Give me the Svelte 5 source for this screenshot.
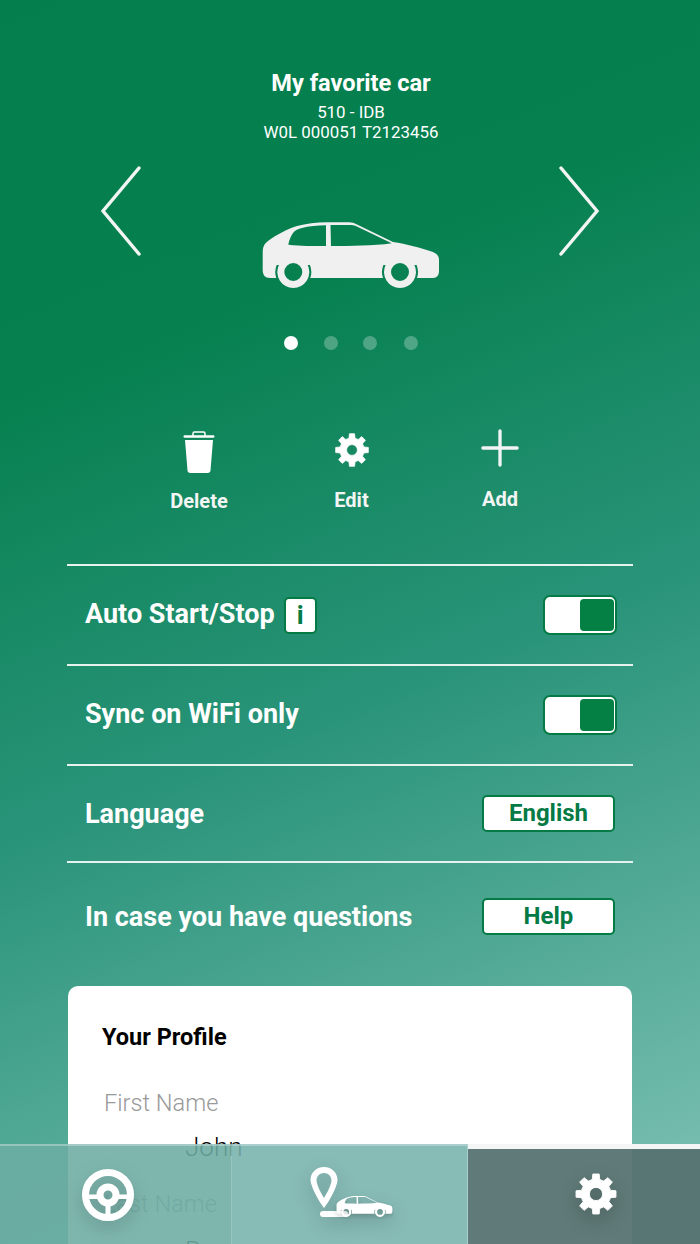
<script lang="ts">
	const circle = (x: number, y: number, r: number) =>
		`M${x - r} ${y}a${r} ${r} 0 1 0 ${r * 2} 0a${r} ${r} 0 1 0 ${-r * 2} 0Z`;

	// body with slits beside the wheels, two windows, two hub holes; drawn with evenodd
	const carPath =
		'M9 58C4 58 1.7 55 1.7 50L1.7 33C1.7 27 3 24 7 21C15 15 26 9 36 6C45 3.5 55 2.500 66 2.200L88 2.200C91 2.200 93 3 96 4.500L132 22C145 24 160 28 172 32C176 34 178 36 178 40L178 51C178 55 176 58 172 58L156 58A18 18 0 0 0 155.6 45L153.4 45A16 16 0 1 1 124.600 45L122.400 45A18 18 0 0 0 122 58L49.3 58A18 18 0 0 0 48.9 45L46.7 45A16 16 0 1 1 17.9 45L15.7 45A18 18 0 0 0 15.3 58Z' +
		'M27.3 24.5C30 14 33 10 40 8.3C48 6 56 5.5 65 5.3L65 26C52 26 38 26 29 25Z' +
		'M69.5 5L90 5C93 5 95 6 99 8L130.7 23.3C112 26 90 26 70 26Z' +
		circle(32.3, 52, 9) +
		circle(139, 52, 9);

	function gearPath(teeth: number, outer: number, root: number, hole: number) {
		const pts: string[] = [];
		const step = (Math.PI * 2) / teeth;
		for (let i = 0; i < teeth; i++) {
			const a = i * step - Math.PI / 2;
			const corners: [number, number][] = [
				[root, a - step * 0.32],
				[outer, a - step * 0.2],
				[outer, a + step * 0.2],
				[root, a + step * 0.32]
			];
			for (const [r, t] of corners) {
				pts.push(`${(r * Math.cos(t)).toFixed(2)} ${(r * Math.sin(t)).toFixed(2)}`);
			}
		}
		return 'M' + pts.join('L') + 'Z' + circle(0, 0, hole);
	}

	const gear = gearPath(8, 46, 34, 15);

	const dots = [true, false, false, false];
</script>

<div class="page">
	<header class="head">
		<h1>My favorite car</h1>
		<p>510 - IDB</p>
		<p>W0L 000051 T2123456</p>
	</header>

	<div class="carousel">
		<svg class="chevron" viewBox="0 0 40 90">
			<path d="M38 2L2 45L38 88" />
		</svg>
		<svg class="car" viewBox="0 0 180 70">
			<path d={carPath} fill-rule="evenodd" />
		</svg>
		<svg class="chevron" viewBox="0 0 40 90">
			<path d="M2 2L38 45L2 88" />
		</svg>
	</div>

	<div class="dots">
		{#each dots as on}
			<span class="dot" class:on></span>
		{/each}
	</div>

	<div class="actions">
		<button class="action">
			<svg class="trash" viewBox="0 0 34 44">
				<path d="M11 6V3.5C11 2.5 11.6 2 12.500 2H21.500C22.400 2 23 2.500 23 3.500V6" class="handle" />
				<path d="M1.500 6.500C1.500 5.700 2 5.300 2.800 5.300H31.200C32 5.300 32.500 5.700 32.500 6.500C32.500 7.300 32 7.700 31.200 7.700H2.800C2 7.700 1.500 7.300 1.500 6.500Z" />
				<path d="M3 10H31L28.500 40.500C28.400 42 27.300 43 25.800 43H8.200C6.700 43 5.600 42 5.500 40.500Z" />
			</svg>
			<span>Delete</span>
		</button>
		<button class="action">
			<svg class="cog" viewBox="-50 -50 100 100">
				<path d={gear} fill-rule="evenodd" />
			</svg>
			<span>Edit</span>
		</button>
		<button class="action">
			<svg class="plus" viewBox="0 0 40 40">
				<path d="M20 2V38M2 20H38" />
			</svg>
			<span>Add</span>
		</button>
	</div>

	<section class="settings">
		<div class="row">
			<span class="label lifted">Auto Start/Stop</span>
			<span class="info">i</span>
			<span class="toggle"><span class="thumb"></span></span>
		</div>
		<div class="row">
			<span class="label lifted">Sync on WiFi only</span>
			<span class="toggle"><span class="thumb"></span></span>
		</div>
		<div class="row short">
			<span class="label">Language</span>
			<button class="pill">English</button>
		</div>
		<div class="row tall">
			<span class="label">In case you have questions</span>
			<button class="pill">Help</button>
		</div>
	</section>

	<section class="card">
		<h2>Your Profile</h2>
		<div class="field">
			<span class="caption">First Name</span>
			<span class="value">John</span>
		</div>
		<div class="field">
			<span class="caption">Last Name</span>
			<span class="value">Doe</span>
		</div>
	</section>

	<nav class="tabs">
		<div class="tab first">
			<svg class="wheel" viewBox="0 0 52 52">
				<circle cx="26" cy="26" r="22.500" class="rim" />
				<path d={circle(26, 26, 11.500) + circle(26, 26, 4.500)} fill-rule="evenodd" />
				<path d="M4 25.500H15V30H4ZM37 25.500H48V30H37ZM23.500 36H28.500V46H23.500Z" />
			</svg>
		</div>
		<div class="tab second">
			<svg class="route" viewBox="0 0 84 52">
				<path d="M14 0C6 0 0.500 6 0.500 13C0.500 19 9 35 14 41C19 35 27.500 19 27.500 13C27.500 6 22 0 14 0ZM14 6C18.500 6 21.500 9.500 21.500 13.500C21.500 17 17 26.500 14 31C11 26.500 6.500 17 6.500 13.500C6.500 9.500 9.500 6 14 6Z" fill-rule="evenodd" />
				<rect x="10" y="44" width="28" height="6" rx="3" />
				<svg x="26" y="28" width="57" height="23" viewBox="0 0 180 70">
					<path d={carPath} fill-rule="evenodd" />
				</svg>
			</svg>
		</div>
		<div class="tab third">
			<svg class="cog-big" viewBox="-50 -50 100 100">
				<path d={gear} fill-rule="evenodd" />
			</svg>
		</div>
	</nav>
</div>

<style>
	:global(body) {
		margin: 0;
	}

	.page {
		position: relative;
		width: 700px;
		height: 1244px;
		overflow: hidden;
		box-sizing: border-box;
		padding-top: 70px;
		font-family: Roboto, sans-serif;
		color: #fff;
		background: linear-gradient(158deg, #047e4c 0%, #06804f 26%, #2a947a 56%, #7cc0b3 97%);
	}

	button {
		font: inherit;
		color: inherit;
		background: none;
		border: 0;
		padding: 0;
	}

	.head {
		text-align: center;
		padding-left: 2px;
	}

	.head h1 {
		margin: 0 0 5px;
		font-size: 23.600px;
		line-height: 27px;
		font-weight: 700;
	}

	.head p {
		margin: 0;
		font-size: 16.900px;
		line-height: 20px;
	}

	.carousel {
		display: flex;
		justify-content: space-between;
		align-items: flex-start;
		margin-top: 24px;
		padding: 0 101px;
	}

	.chevron {
		width: 40px;
		height: 90px;
		fill: none;
		stroke: #f2f5f3;
		stroke-width: 3.500;
		stroke-linecap: round;
	}

	.car {
		width: 180px;
		height: 70px;
		margin: 54px 0 0 2px;
		fill: #f0f0f0;
	}

	.dots {
		display: flex;
		gap: 26px;
		margin-top: 46px;
		padding-left: 284px;
	}

	.dot {
		width: 14px;
		height: 14px;
		border-radius: 50%;
		background: rgba(255, 255, 255, 0.27);
	}

	.dot.on {
		background: #fff;
	}

	.dot:nth-child(3) {
		margin-left: -1px;
	}

	.dot:nth-child(4) {
		margin-left: 1px;
	}

	.actions {
		display: grid;
		grid-template-columns: 152px 153px 144px;
		margin: 78px 0 0 123px;
		height: 136px;
	}

	.action {
		display: flex;
		flex-direction: column;
		align-items: center;
		font-size: 20px;
		line-height: 24px;
		font-weight: 700;
		color: #f2f5f3;
	}

	.action svg {
		display: block;
		fill: #fff;
	}

	.trash {
		width: 34px;
		height: 44px;
		margin: 2px 0 15px;
	}

	.handle {
		fill: none;
		stroke: #fff;
		stroke-width: 1.500;
	}

	.cog {
		width: 36px;
		height: 36px;
		margin: 4px 0 20px;
		stroke: #fff;
		stroke-width: 2;
		stroke-linejoin: round;
	}

	.action .plus {
		width: 38px;
		height: 38px;
		margin: 1px 0 20px;
		fill: none;
		stroke: #f2f5f3;
		stroke-width: 3.500;
		stroke-linecap: round;
	}

	.settings {
		margin: 0 67px;
	}

	.row {
		display: flex;
		align-items: center;
		box-sizing: border-box;
		height: 100px;
		padding: 0 18px;
		border-top: 2px solid #e6f2ee;
	}

	.row.short {
		height: 97px;
	}

	.row.tall {
		height: 125px;
		padding-bottom: 15px;
	}

	.label {
		font-size: 27px;
		font-weight: 700;
	}

	.label.lifted {
		margin-bottom: 3px;
	}

	.info {
		box-sizing: border-box;
		width: 33px;
		height: 37px;
		margin-left: 9px;
		border: 2px solid #047a45;
		border-radius: 5px;
		background: #fff;
		color: #047a45;
		font-size: 26px;
		font-weight: 700;
		line-height: 33px;
		text-align: center;
	}

	.toggle {
		display: flex;
		justify-content: flex-end;
		box-sizing: border-box;
		width: 74px;
		height: 40px;
		margin: 0 -2px 0 auto;
		padding: 2px 1px 2px 2px;
		border: 2px solid #047a45;
		border-radius: 7px;
		background: #fff;
	}

	.thumb {
		width: 34px;
		border-radius: 4px;
		background: #048044;
	}

	.pill {
		box-sizing: border-box;
		width: 133px;
		height: 37px;
		margin: 0 0 0 auto;
		border: 2px solid #047a45;
		border-radius: 5px;
		background: #fff;
		color: #047a45;
		font-size: 24px;
		font-weight: 700;
		line-height: 33px;
	}

	.row.tall .pill {
		margin-top: -2px;
	}

	.card {
		box-sizing: border-box;
		height: 400px;
		margin: 0 68px;
		padding: 37px 34px;
		border-radius: 10px;
		background: #fff;
		color: #000;
	}

	.card h2 {
		margin: 0;
		font-size: 23.500px;
		line-height: 28px;
		font-weight: 700;
	}

	.field {
		display: flex;
		flex-direction: column;
		align-items: flex-start;
		height: 101px;
		padding: 38px 0 0 2px;
		box-sizing: border-box;
	}

	.caption {
		font-size: 23.600px;
		line-height: 28px;
		font-weight: 300;
		color: #999;
	}

	.value {
		margin: 15px 0 0 81px;
		font-size: 26px;
		line-height: 30px;
		font-weight: 300;
	}

	.field:last-child .value {
		margin-top: 18px;
	}

	.tabs {
		position: absolute;
		left: 0;
		right: 0;
		bottom: 0;
		display: grid;
		grid-template-columns: 232px 236px 232px;
		height: 100px;
	}

	.tab {
		display: flex;
		align-items: center;
		justify-content: center;
		border-top: 2px solid rgba(255, 255, 255, 0.3);
		box-sizing: border-box;
		height: 100px;
	}

	.tab svg {
		fill: #fff;
		filter: drop-shadow(0 7px 9px rgba(0, 0, 0, 0.18));
	}

	.first {
		background: rgba(108, 172, 163, 0.88);
		border-right: 1px solid rgba(255, 255, 255, 0.2);
		padding: 0 16px 0 0;
	}

	.second {
		background: rgba(118, 178, 172, 0.88);
		border-right: 1px solid rgba(255, 255, 255, 0.3);
	}

	.third {
		border-top: 5px solid #f4f6f5;
		background: rgba(86, 115, 113, 0.95);
		padding: 0 0 6px 23px;
	}

	.wheel {
		width: 52px;
		height: 52px;
	}

	.rim {
		fill: none;
		stroke: #fff;
		stroke-width: 7;
	}

	.route {
		width: 84px;
		height: 52px;
		margin: -4px 0 0 5px;
	}

	.cog-big {
		width: 44px;
		height: 44px;
		stroke: #fff;
		stroke-width: 2;
		stroke-linejoin: round;
	}
</style>
